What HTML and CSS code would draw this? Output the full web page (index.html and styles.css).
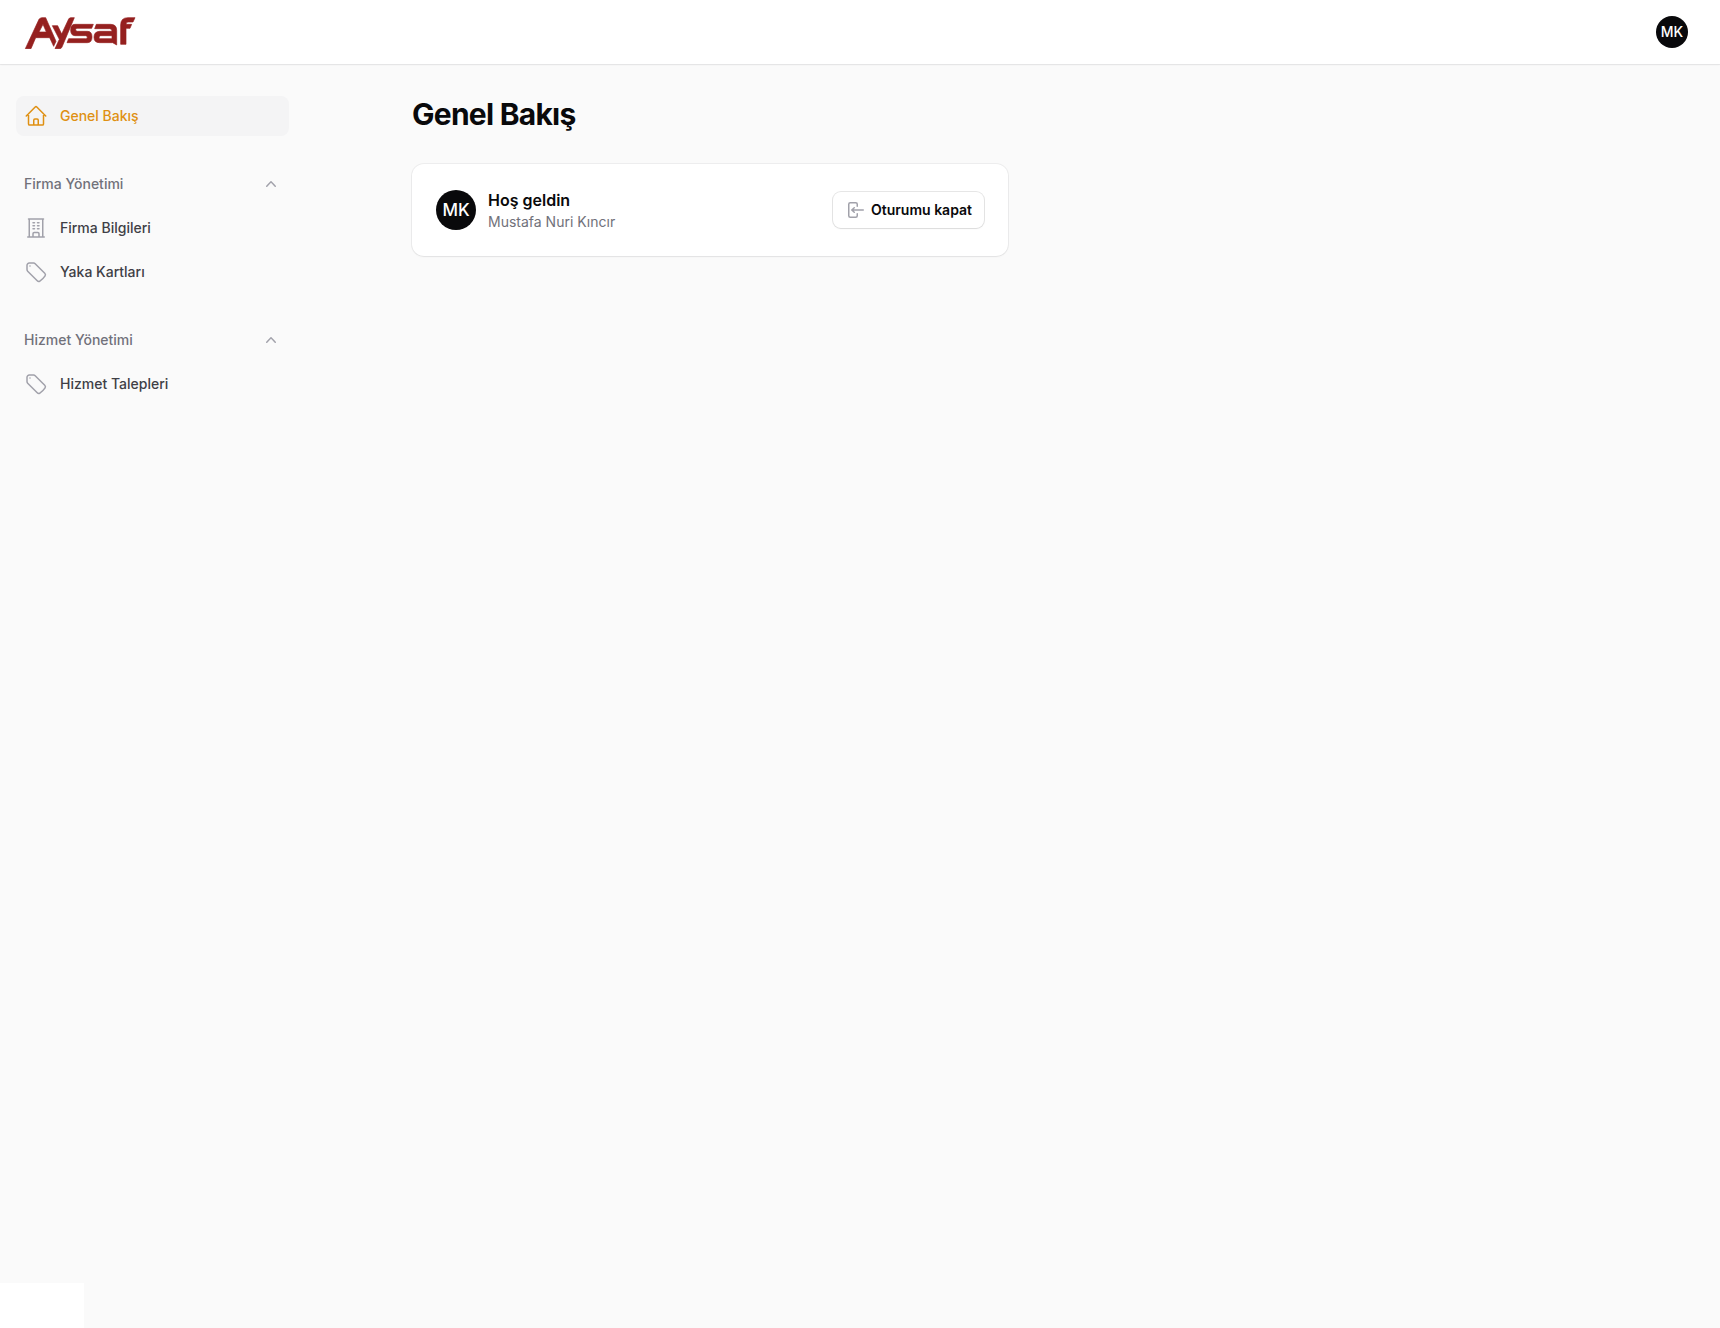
FILE: index.html
```html
<!DOCTYPE html>
<html lang="tr">
<head>
<meta charset="utf-8">
<meta name="viewport" content="width=device-width, initial-scale=1">
<title>Genel Bakış - Aysaf</title>
<link rel="stylesheet" href="styles.css">
</head>
<body>
<svg class="sprite" aria-hidden="true">
  <symbol id="tag" viewBox="0 0 24 24"><path d="M9.568 3H5.25A2.25 2.25 0 0 0 3 5.25v4.318c0 .597.237 1.17.659 1.591l9.581 9.581c.699.699 1.78.872 2.607.33a18.095 18.095 0 0 0 5.223-5.223c.542-.827.369-1.908-.33-2.607L11.16 3.66A2.25 2.25 0 0 0 9.568 3Z"/><path d="M6 6h.008v.008H6V6Z"/></symbol>
</svg>
<header class="topbar">
  <a class="brand" href="#" aria-label="Aysaf">
    <svg class="logo" viewBox="72 45 336 102" aria-hidden="true">
      <g fill="#95201f" stroke="#95201f" stroke-width="2" fill-rule="evenodd">
        <path d="M76 146 117 58Q120 53 126 53H137L168 124 161 139 149 113H107L93 146ZM117 96H139L129 73Z"/>
        <path d="M157 77H173L185 102 206 57Q208 53 213 53H223L186 141Q184 146 179 146H165L178 118Z"/>
        <path d="M225 73H280L275 85H231Q227 85 227 89T231 94H262Q276 94 276 111T262 128H201L206 116H257Q262 116 262 111.500T257 107H225Q212 107 212 90T225 73Z"/>
        <path d="M289 73H332Q350 73 350 91V135L338 128H299Q282 128 282 111.500T299 94H336Q336 86 329 86H284ZM302 107Q297 107 297 111.500T302 116H336V107Z"/>
        <path d="M362 133V75Q362 53 384 53H405L399 66H384Q378 66 378 73H395L390 85H378V133Z"/>
      </g>
    </svg>
  </a>
  <button class="avatar avatar-small" type="button" aria-label="Kullanıcı menüsü">MK</button>
</header>
<div class="layout">
  <nav class="sidebar" aria-label="Ana menü">
    <a class="item active" href="#" aria-current="page">
      <svg class="icon" viewBox="0 0 24 24" aria-hidden="true"><path d="m2.250 12 8.954-8.955c.44-.439 1.152-.439 1.591 0L21.750 12M4.500 9.750v10.125c0 .621.504 1.125 1.125 1.125H9.750v-4.875c0-.621.504-1.125 1.125-1.125h2.250c.621 0 1.125.504 1.125 1.125V21h4.125c.621 0 1.125-.504 1.125-1.125V9.750M8.250 21h8.250"/></svg>
      Genel Bakış
    </a>
    <section class="group">
      <button class="group-toggle" type="button" aria-expanded="true">Firma Yönetimi
        <svg class="chevron" viewBox="0 0 20 20" aria-hidden="true"><path d="M14.770 12.790a.75.75 0 0 1-1.060-.02L10 8.832 6.290 12.770a.75.75 0 1 1-1.080-1.040l4.250-4.500a.75.75 0 0 1 1.080 0l4.250 4.500a.75.75 0 0 1-.02 1.060Z"/></svg>
      </button>
      <a class="item" href="#">
        <svg class="icon" viewBox="0 0 24 24" aria-hidden="true"><path d="M3.750 21h16.500M4.500 3h15M5.250 3v18m13.500-18v18M9 6.750h1.500m-1.500 3h1.500m-1.500 3h1.500m3-6H15m-1.500 3H15m-1.500 3H15M9 21v-3.375c0-.621.504-1.125 1.125-1.125h3.750c.621 0 1.125.504 1.125 1.125V21"/></svg>
        Firma Bilgileri
      </a>
      <a class="item" href="#"><svg class="icon" aria-hidden="true"><use href="#tag"/></svg>Yaka Kartları</a>
    </section>
    <section class="group">
      <button class="group-toggle" type="button" aria-expanded="true">Hizmet Yönetimi
        <svg class="chevron" viewBox="0 0 20 20" aria-hidden="true"><path d="M14.770 12.790a.75.75 0 0 1-1.060-.02L10 8.832 6.290 12.770a.75.75 0 1 1-1.080-1.040l4.250-4.500a.75.75 0 0 1 1.080 0l4.250 4.500a.75.75 0 0 1-.02 1.060Z"/></svg>
      </button>
      <a class="item" href="#"><svg class="icon" aria-hidden="true"><use href="#tag"/></svg>Hizmet Talepleri</a>
    </section>
  </nav>
  <main class="main">
    <div class="content">
      <h1 class="title">Genel Bakış</h1>
      <div class="widgets">
        <section class="card">
          <span class="avatar avatar-large" aria-hidden="true">MK</span>
          <div class="welcome">
            <h2 class="greeting">Hoş geldin</h2>
            <p class="name">Mustafa Nuri Kıncır</p>
          </div>
          <button class="logout" type="button">
            <svg class="logout-icon" viewBox="0 0 20 20" aria-hidden="true"><path fill-rule="evenodd" d="M3 4.250A2.250 2.250 0 0 1 5.250 2h5.500A2.250 2.250 0 0 1 13 4.250v2a.75.75 0 0 1-1.500 0v-2a.75.75 0 0 0-.75-.75h-5.500a.75.75 0 0 0-.75.75v11.500c0 .414.336.75.75.75h5.500a.75.75 0 0 0 .75-.75v-2a.75.75 0 0 1 1.500 0v2A2.250 2.250 0 0 1 10.750 18h-5.500A2.250 2.250 0 0 1 3 15.750V4.250Z"/><path fill-rule="evenodd" d="M19 10a.75.75 0 0 0-.75-.75H8.704l1.048-.943a.75.75 0 1 0-1.004-1.114l-2.500 2.250a.75.75 0 0 0 0 1.114l2.500 2.250a.75.75 0 1 0 1.004-1.114l-1.048-.943h9.546A.75.75 0 0 0 19 10Z"/></svg>
            Oturumu kapat
          </button>
        </section>
      </div>
    </div>
  </main>
</div>
<div class="status"></div>
</body>
</html>
```
FILE: styles.css
```css
*, *::before, *::after { box-sizing: border-box; }

body {
  margin: 0;
  min-height: 100vh;
  background: #fafafa;
  color: #09090b;
  font: 14px/20px Inter, "Liberation Sans", sans-serif;
}

h1, h2, p { margin: 0; }
a { color: inherit; text-decoration: none; }
button { margin: 0; border: 0; font: inherit; color: inherit; cursor: pointer; }
svg { display: block; flex: none; }
.sprite { position: absolute; width: 0; height: 0; }

.topbar {
  display: flex;
  align-items: center;
  justify-content: space-between;
  height: 64px;
  padding: 0 32px 0 24px;
  background: #fff;
  box-shadow: 0 0 0 1px rgba(9, 9, 11, .05), 0 1px 2px rgba(0, 0, 0, .05);
}

.logo { width: 112px; height: 34px; }

.avatar {
  display: flex;
  flex: none;
  align-items: center;
  justify-content: center;
  padding: 0;
  border-radius: 50%;
  background: #09090b;
  color: #fff;
}
.avatar-small { width: 32px; height: 32px; font-size: 14px; font-weight: 500; }
.avatar-large { width: 40px; height: 40px; font-size: 17px; font-weight: 500; }

.layout { display: flex; }

.sidebar {
  display: flex;
  flex: none;
  flex-direction: column;
  gap: 28px;
  width: 320px;
  padding: 32px 31px 32px 16px;
  font-weight: 500;
}

.group { display: flex; flex-direction: column; gap: 4px; }

.group-toggle {
  display: flex;
  align-items: center;
  justify-content: space-between;
  padding: 8px;
  background: none;
  color: #71717a;
  line-height: 24px;
  text-align: left;
}
.chevron { width: 20px; height: 20px; fill: #a1a1aa; }

.item {
  display: flex;
  align-items: center;
  gap: 12px;
  padding: 8px;
  border-radius: 8px;
  color: #3f3f46;
}
.icon {
  width: 24px;
  height: 24px;
  fill: none;
  stroke: #a1a1aa;
  stroke-width: 1.5;
  stroke-linecap: round;
  stroke-linejoin: round;
}
.active { background: #f4f4f5; color: #df9013; }
.active .icon { stroke: #df9013; }

.main { flex: 1; min-width: 0; }
.content {
  display: flex;
  flex-direction: column;
  gap: 32px;
  max-width: 1280px;
  margin: 0 auto;
  padding: 32px;
}
.title { font-size: 30px; line-height: 36px; font-weight: 700; letter-spacing: -0.025em; }

.widgets { display: grid; grid-template-columns: repeat(2, minmax(0, 1fr)); gap: 24px; }
.card {
  display: flex;
  align-items: center;
  gap: 12px;
  padding: 24px;
  border-radius: 12px;
  background: #fff;
  box-shadow: 0 0 0 1px rgba(9, 9, 11, .05), 0 1px 2px rgba(0, 0, 0, .05);
}
.welcome { flex: 1; }
.greeting { font-size: 16px; line-height: 24px; font-weight: 600; }
.name { color: #71717a; }

.logout {
  display: flex;
  align-items: center;
  gap: 6px;
  padding: 8px 12px;
  border-radius: 8px;
  background: #fff;
  font-weight: 600;
  box-shadow: 0 0 0 1px rgba(9, 9, 11, .1), 0 1px 2px rgba(0, 0, 0, .05);
}
.logout-icon { width: 20px; height: 20px; fill: #a1a1aa; }

.status {
  position: fixed;
  bottom: 0;
  left: 0;
  width: 84px;
  height: 45px;
  background: #fff;
}
```
